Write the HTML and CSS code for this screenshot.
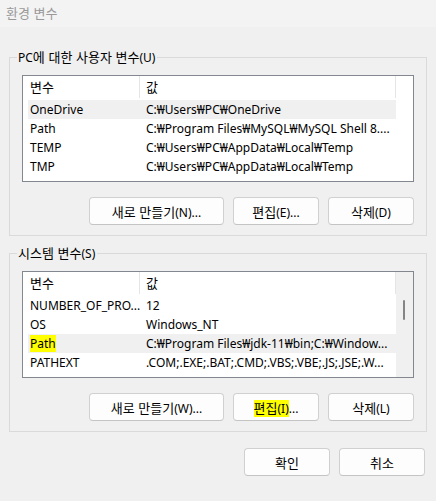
FILE: index.html
```html
<!DOCTYPE html>
<html lang="ko">

<head>
    <meta charset="UTF-8">
    <meta name="viewport" content="width=device-width, initial-scale=1.0">
    <title>환경 변수</title>
    <link rel="stylesheet" href="styles.css">
</head>

<body>
    <div id="titleBar"><span class="ko">환경 변수</span></div>

    <fieldset class="group">
        <legend>PC<span class="ko">에 대한 사용자 변수</span>(U)</legend>
        <div class="list">
            <div class="listMain">
                <div class="head">
                    <div class="hcell ko">변수</div>
                    <div class="hcell ko">값</div>
                </div>
                <div class="row sel"><span>OneDrive</span><span>C:₩Users₩PC₩OneDrive</span></div>
                <div class="row"><span>Path</span><span>C:₩Program Files₩MySQL₩MySQL Shell 8....</span></div>
                <div class="row"><span>TEMP</span><span>C:₩Users₩PC₩AppData₩Local₩Temp</span></div>
                <div class="row"><span>TMP</span><span>C:₩Users₩PC₩AppData₩Local₩Temp</span></div>
            </div>
            <div class="scroll"></div>
        </div>
        <div class="btns">
            <button type="button" class="wide"><span class="ko">새로 만들기</span>(N)...</button>
            <button type="button"><span class="ko">편집</span>(E)...</button>
            <button type="button"><span class="ko">삭제</span>(D)</button>
        </div>
    </fieldset>

    <fieldset class="group">
        <legend><span class="ko">시스템 변수</span>(S)</legend>
        <div class="list">
            <div class="listMain">
                <div class="head">
                    <div class="hcell ko">변수</div>
                    <div class="hcell ko">값</div>
                </div>
                <div class="row"><span>NUMBER_OF_PRO...</span><span>12</span></div>
                <div class="row"><span>OS</span><span>Windows_NT</span></div>
                <div class="row sel"><span><mark>Path</mark></span><span>C:₩Program Files₩jdk-11₩bin;C:₩Window...</span></div>
                <div class="row"><span>PATHEXT</span><span>.COM;.EXE;.BAT;.CMD;.VBS;.VBE;.JS;.JSE;.W...</span></div>
            </div>
            <div class="scroll on">
                <div class="thumb"></div>
            </div>
        </div>
        <div class="btns">
            <button type="button" class="wide"><span class="ko">새로 만들기</span>(W)...</button>
            <button type="button"><mark><span class="ko">편집</span>(I)</mark>...</button>
            <button type="button"><span class="ko">삭제</span>(L)</button>
        </div>
    </fieldset>

    <div class="btns bottom">
        <button type="button"><span class="ko">확인</span></button>
        <button type="button"><span class="ko">취소</span></button>
    </div>
</body>

</html>
```

FILE: styles.css
```css
body {
    margin: 0;
    background-color: #f0f0f0;
    font-family: "Noto Sans", "Noto Sans CJK KR", sans-serif;
    font-size: 12px;
    color: #000;
}

.ko {
    font-family: "Noto Sans CJK KR", sans-serif;
    font-size: 13px;
}

#titleBar {
    height: 27px;
    line-height: 25px;
    padding-left: 6px;
    background-color: #f3f3f3;
    color: #999;
}

.group {
    margin: 0 10px 0 9px;
    padding: 10px 12px 10px 12px;
    border: 1px solid #dadada;
}

.group:first-of-type {
    margin-top: 22px;
}

.group + .group {
    margin-top: 9px;
}

.group legend {
    height: 16px;
    margin-left: -5px;
    padding: 0 2px 0 1px;
    line-height: 16px;
    overflow: visible;
}

.list {
    display: flex;
    height: 107px;
    border: 1px solid #828790;
    background-color: #fff;
    box-sizing: border-box;
}

.listMain {
    width: 373px;
}

.head {
    display: grid;
    grid-template-columns: 117px 256px;
    height: 24px;
}

.hcell {
    height: 22px;
    line-height: 22px;
    padding-left: 7px;
    border-right: 1px solid #e5e5e5;
    box-sizing: border-box;
}

.hcell + .hcell {
    padding-left: 6px;
}

.row {
    display: grid;
    grid-template-columns: 116px 1fr;
    margin-left: 5px;
    padding-left: 2px;
    height: 19px;
    line-height: 19px;
    white-space: nowrap;
    overflow: hidden;
}

.row.sel {
    background-color: #f0f0f0;
}

mark {
    background-color: #ffff00;
    color: #000;
}

.scroll {
    width: 17px;
}

.scroll.on {
    background-color: #f0f0f0;
    padding-top: 28px;
    box-sizing: border-box;
}

.thumb {
    width: 2px;
    height: 20px;
    margin-left: 7px;
    background-color: #858585;
    border-radius: 1px;
}

.btns {
    display: flex;
    justify-content: flex-end;
    gap: 9px;
    margin-top: 15px;
}

.btns button {
    width: 86px;
    height: 28px;
    padding: 0;
    border: 1px solid #d0d0d0;
    border-bottom-color: #c4c4c4;
    border-radius: 4px;
    background-color: #fdfdfd;
    font-family: inherit;
    font-size: 12px;
    color: #000;
}

.btns button.wide {
    width: 135px;
}

.btns.bottom {
    margin: 16px 11px 0 0;
}
```
